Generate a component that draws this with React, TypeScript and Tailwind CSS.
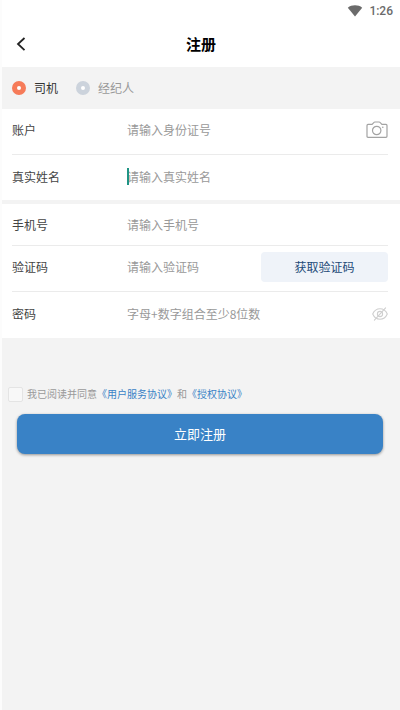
import { useState } from 'react';
import type { InputHTMLAttributes, ReactNode } from 'react';

interface FieldProps extends InputHTMLAttributes<HTMLInputElement> {
  id: string;
  label: string;
  active?: boolean;
  className?: string;
  children?: ReactNode;
}

function Field({ id, label, active, className = 'h-[46px] pb-0.5', children, ...rest }: FieldProps) {
  return (
    <div className={`flex items-center ${className}`}>
      <label htmlFor={id} className="w-[115px] shrink-0 text-[#444444]">
        {label}
      </label>
      <div className="relative flex min-w-0 flex-1 items-center">
        {active && <span className="absolute left-0 h-[17px] w-0.5 bg-[#1f9484]" />}
        <input
          id={id}
          className="w-full min-w-0 bg-transparent leading-5 caret-[#00897b] outline-none placeholder:text-[#999999]"
          {...rest}
        />
      </div>
      {children}
    </div>
  );
}

function StatusBar() {
  return (
    <div className="flex h-[22px] items-center justify-end gap-1.5 pr-[7px] text-[#6b6b6b]">
      <svg width="16" height="12" viewBox="0 0 16 12" fill="currentColor">
        <path d="M8 11.6 0.8 2.7C2.8 1.1 5.3 0.3 8 0.3s5.2 0.8 7.2 2.4z" />
      </svg>
      <span className="font-['Roboto',sans-serif] text-xs font-medium">1:26</span>
    </div>
  );
}

function CameraIcon() {
  return (
    <svg width="22" height="18" viewBox="0 0 22 18" fill="none" stroke="#a3a3a3" strokeWidth="1.2" strokeLinejoin="round">
      <path d="M2 3.4h4.1L8 1.4q.3-.4.8-.4h4.4q.5 0 .8.4l1.9 2H20q1 0 1 1v10.9q0 1-1 1H2q-1 0-1-1V4.4q0-1 1-1z" />
      <circle cx="10.7" cy="9.5" r="4.2" />
      <circle cx="16.8" cy="6.3" r="0.8" fill="#a3a3a3" stroke="none" />
    </svg>
  );
}

function EyeOffIcon() {
  return (
    <svg width="16" height="14" viewBox="0 0 16 14" fill="none" stroke="#cfcfcf" strokeWidth="1.1" strokeLinecap="round">
      <path d="M.7 7C2.3 3.4 4.9 1.8 8 1.8S13.7 3.4 15.3 7c-1.6 3.6-4.2 5.2-7.3 5.2S2.3 10.6.7 7z" />
      <circle cx="8" cy="7" r="2.6" />
      <path d="M13.6.8 2.4 13.2" />
    </svg>
  );
}

const radioClass =
  'h-3.5 w-3.5 appearance-none rounded-full border-5 border-[#ccd3dc] bg-white checked:border-[#f67b59]';

export default function App() {
  const [role, setRole] = useState('driver');
  const [agreed, setAgreed] = useState(false);
  const [showPassword, setShowPassword] = useState(false);

  return (
    <div className="min-h-screen border-l-2 border-[#fcfcfc] bg-[#f3f3f3] font-['Noto_Sans_CJK_SC',sans-serif] text-xs">
      <header className="bg-white">
        <StatusBar />
        <div className="grid h-[45px] grid-cols-[1fr_auto_1fr] items-center pb-0.5 pl-3">
          <button type="button" aria-label="返回" className="w-6">
            <svg width="14" height="16" viewBox="0 0 14 16" fill="none" stroke="#222222" strokeWidth="1.8">
              <path d="M10.5 2 4 8l6.5 6.2" />
            </svg>
          </button>
          <h1 className="pr-3 text-[15px] leading-5 font-bold text-black">注册</h1>
        </div>
      </header>

      <form onSubmit={(e) => e.preventDefault()}>
        <div className="flex h-[42px] items-center gap-[18px] pl-2.5">
          <label className="flex items-center gap-2 text-[#333333]">
            <input
              type="radio"
              name="role"
              className={radioClass}
              checked={role === 'driver'}
              onChange={() => setRole('driver')}
            />
            司机
          </label>
          <label className="flex items-center gap-2 text-[#999999]">
            <input
              type="radio"
              name="role"
              className={radioClass}
              checked={role === 'broker'}
              onChange={() => setRole('broker')}
            />
            经纪人
          </label>
        </div>

        <section className="divide-y divide-[#ebebeb] bg-white pr-3 pl-2.5">
          <Field id="account" label="账户" placeholder="请输入身份证号" className="h-[46px] pb-1">
            <button type="button" aria-label="拍照识别">
              <CameraIcon />
            </button>
          </Field>
          <Field id="name" label="真实姓名" placeholder="请输入真实姓名" className="h-[45px] pb-0.5" active />
        </section>

        <section className="mt-1 divide-y divide-[#ebebeb] bg-white pr-3 pl-2.5">
          <Field id="phone" label="手机号" placeholder="请输入手机号" type="tel" className="h-[42px]" />
          <Field id="code" label="验证码" placeholder="请输入验证码" className="h-[46px] pb-1">
            <button type="button" className="h-[30px] w-[127px] shrink-0 rounded bg-[#eff3f9] text-[#1d4a78]">
              获取验证码
            </button>
          </Field>
          <Field
            id="password"
            label="密码"
            placeholder="字母+数字组合至少8位数"
            type={showPassword ? 'text' : 'password'}
          >
            <button type="button" aria-label="显示密码" onClick={() => setShowPassword(!showPassword)}>
              <EyeOffIcon />
            </button>
          </Field>
        </section>

        <div className="mt-12 flex h-4 items-center gap-1 pl-1.5 text-[10px] text-[#999999]">
          <input
            id="agree"
            type="checkbox"
            checked={agreed}
            onChange={(e) => setAgreed(e.target.checked)}
            className="h-[15px] w-[15px] appearance-none rounded-xs border border-[#e4e4e4] bg-[#f8f8f8] checked:bg-[#3982c6]"
          />
          <p>
            <label htmlFor="agree">我已阅读并同意</label>
            <a href="#service" className="text-[#3982c6]">《用户服务协议》</a>
            和
            <a href="#authorization" className="text-[#3982c6]">《授权协议》</a>
          </p>
        </div>

        <div className="mt-3 pr-[17px] pl-[15px]">
          <button
            type="submit"
            className="h-10 w-full rounded-lg bg-[#3982c6] text-[13px] text-white shadow-[0_1px_3px_rgba(0,0,0,0.4)]"
          >
            立即注册
          </button>
        </div>
      </form>
    </div>
  );
}
